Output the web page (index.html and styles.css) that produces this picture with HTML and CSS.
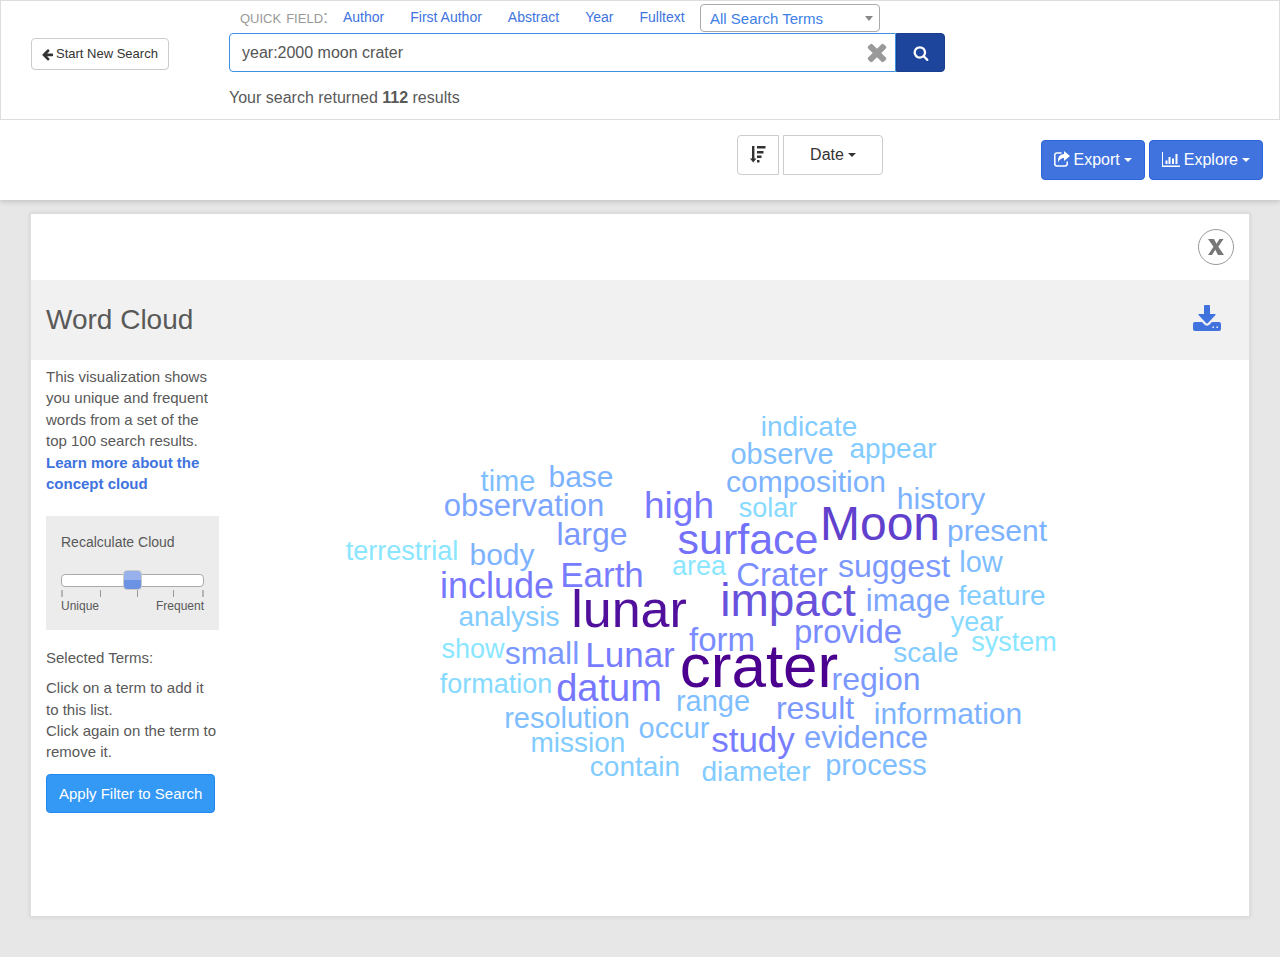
FILE: index.html
```html
<!DOCTYPE html>
<html lang="en">
<head>
<meta charset="utf-8">
<title>Word Cloud</title>
<link rel="stylesheet" href="styles.css">
</head>
<body>
<header class="top">
  <form class="search-bar">
    <div class="start">
      <button type="button" class="btn btn-small">
        <svg class="icon" width="13" height="13" viewBox="0 0 1792 1792"><path d="M1664 896v128q0 53-32.5 90.5t-84.5 37.5h-704l293 294q38 36 38 90t-38 90l-75 76q-37 37-90 37-52 0-91-37l-651-652q-37-37-37-90 0-52 37-91l651-650q38-38 91-38 52 0 90 38l75 74q38 38 38 91t-38 91l-293 293h704q52 0 84.5 37.5t32.5 90.5z"/></svg>
        Start New Search
      </button>
    </div>
    <div class="search-col">
      <div class="quick">
        <span class="quick-label">Quick field:</span>
        <nav class="fields">
          <a href="#">Author</a>
          <a href="#">First Author</a>
          <a href="#">Abstract</a>
          <a href="#">Year</a>
          <a href="#">Fulltext</a>
        </nav>
        <div class="terms">
          <select aria-label="All Search Terms"><option>All Search Terms</option></select>
        </div>
      </div>
      <div class="query">
        <input type="text" aria-label="Search query" value="year:2000 moon crater">
        <button type="button" class="clear" aria-label="Clear">
          <svg class="icon" width="28" height="28" viewBox="0 0 1792 1792"><path d="M1490 1322q0 40-28 68l-136 136q-28 28-68 28t-68-28l-294-294-294 294q-28 28-68 28t-68-28l-136-136q-28-28-28-68t28-68l294-294-294-294q-28-28-28-68t28-68l136-136q28-28 68-28t68 28l294 294 294-294q28-28 68-28t68 28l136 136q28 28 28 68t-28 68l-294 294 294 294q28 28 28 68z"/></svg>
        </button>
        <button type="submit" class="go" aria-label="Search">
          <svg class="icon" width="16" height="16" viewBox="0 0 1792 1792"><path d="M1216 832q0-185-131.5-316.5t-316.5-131.5-316.5 131.5-131.5 316.5 131.5 316.5 316.5 131.5 316.5-131.5 131.5-316.5zm512 832q0 52-38 90t-90 38q-54 0-90-38l-343-342q-179 124-399 124-143 0-273.5-55.5t-225-150-150-225-55.5-273.5 55.5-273.5 150-225 225-150 273.5-55.5 273.5 55.5 225 150 150 225 55.5 273.5q0 220-124 399l343 343q37 37 37 90z"/></svg>
        </button>
      </div>
      <p class="count">Your search returned <strong>112</strong> results</p>
    </div>
  </form>
  <div class="tools">
    <div class="sort">
      <button type="button" class="btn sort-dir" aria-label="Sort direction">
        <svg class="icon" width="16" height="17" viewBox="0 0 16 17"><path d="M2 0h2.400v12.500h2.100L3.200 16.500 0 12.500h2zM7 0h8.500v2.400H7zM7 5h6.500v2.400H7zM7 9.500h4.500V12H7zM7 14h2.500v2.400H7z"/></svg>
      </button>
      <button type="button" class="btn sort-by">Date <span class="caret"></span></button>
    </div>
    <div class="actions">
      <button type="button" class="btn btn-blue">
        <svg class="icon icon-up" width="16" height="16" viewBox="0 0 16 16"><path d="M7.500 2H3Q.8 2 .8 4.200v8.600Q.8 15 3 15h8q2.200 0 2.200-2.200V10.500" fill="none" stroke="currentColor" stroke-width="1.500"/><path d="M10 0l6 5-6 5V7Q6 7 4 11.500 3 3.500 10 3z"/></svg>
        Export <span class="caret"></span>
      </button>
      <button type="button" class="btn btn-blue">
        <svg class="icon icon-up" width="18" height="16" viewBox="0 0 18 16"><path d="M0 1h1v13.500h17V16H0zM3.500 9.500h2V13h-2zM6.500 6h2v7h-2zM10 7.500h2V13h-2zM13.500 3h2v10h-2z"/></svg>
        Explore <span class="caret"></span>
      </button>
    </div>
  </div>
</header>

<main class="panel">
  <div class="panel-top">
    <button type="button" class="close" aria-label="Close">
      <svg class="icon" width="16" height="16" viewBox="0 0 16 16"><path d="M0 0h6l2.500 4.800L11.500 0H15.500L10.300 7.700 16 16h-6L7.300 10.800 4 16H0l5.500-8.200z"/></svg>
    </button>
  </div>
  <div class="panel-title">
    <h1>Word Cloud</h1>
    <button type="button" class="download" aria-label="Download">
      <svg class="icon" width="28" height="26" viewBox="0 0 28 26"><path d="M11 1q0-1 1-1h4q1 0 1 1v8h5q1 0 .5 1l-7.500 8q-1 1-2 0L5.500 10Q5 9 6 9h5z"/><path fill-rule="evenodd" d="M2 17h7l3 3q2 1.500 4 0l3-3h7q2 0 2 2v5q0 2-2 2H2q-2 0-2-2v-5q0-2 2-2zm17.500 4.500V23H21v-1.500zm4 0V23H25v-1.500z"/></svg>
    </button>
  </div>
  <div class="panel-body">
    <aside class="side">
      <p class="intro">This visualization shows you unique and frequent words from a set of the top 100 search results. <a href="#">Learn more about the concept cloud</a></p>
      <div class="recalc">
        <label for="mix">Recalculate Cloud</label>
        <input id="mix" type="range" min="0" max="4" value="2">
        <div class="ticks"><i></i><i></i><i></i><i></i><i></i></div>
        <div class="ends"><span>Unique</span><span>Frequent</span></div>
      </div>
      <p class="selected">Selected Terms:</p>
      <p class="help">Click on a term to add it to this list.<br>Click again on the term to remove it.</p>
      <button type="button" class="btn apply">Apply Filter to Search</button>
    </aside>
    <div class="cloud">
      <svg viewBox="249 360 985 540" role="img" aria-label="Word cloud">
        <text class="s28" x="809" y="436">indicate</text>
        <text class="s29" x="782" y="464">observe</text>
        <text class="s28" x="893" y="458">appear</text>
        <text class="s30" x="806" y="492">composition</text>
        <text class="s30" x="941" y="509">history</text>
        <text class="s27" x="768" y="517">solar</text>
        <text class="s48" x="880" y="540">Moon</text>
        <text class="s30" x="997" y="541">present</text>
        <text class="s43" x="748" y="554">surface</text>
        <text class="s26" x="699" y="575">area</text>
        <text class="s33" x="782" y="586">Crater</text>
        <text class="s32" x="894" y="577">suggest</text>
        <text class="s29" x="981" y="572">low</text>
        <text class="s37" x="679" y="518">high</text>
        <text class="s29" x="508" y="491">time</text>
        <text class="s30" x="581" y="487">base</text>
        <text class="s31" x="524" y="516">observation</text>
        <text class="s32" x="592" y="545">large</text>
        <text class="s26" x="402" y="560">terrestrial</text>
        <text class="s30" x="502" y="565">body</text>
        <text class="s36" x="497" y="598">include</text>
        <text class="s35" x="602" y="587">Earth</text>
        <text class="s52" x="629" y="627">lunar</text>
        <text class="s46" x="788" y="616">impact</text>
        <text class="s31" x="908" y="611">image</text>
        <text class="s28" x="1002" y="605">feature</text>
        <text class="s27" x="977" y="631">year</text>
        <text class="s33" x="848" y="643">provide</text>
        <text class="s26" x="1014" y="651">system</text>
        <text class="s28" x="926" y="662">scale</text>
        <text class="s33" x="722" y="651">form</text>
        <text class="s62" x="759" y="687">crater</text>
        <text class="s32" x="876" y="690">region</text>
        <text class="s29" x="713" y="711">range</text>
        <text class="s32" x="815" y="719">result</text>
        <text class="s30" x="948" y="724">information</text>
        <text class="s29" x="674" y="738">occur</text>
        <text class="s35" x="753" y="752">study</text>
        <text class="s31" x="866" y="748">evidence</text>
        <text class="s29" x="876" y="775">process</text>
        <text class="s28" x="756" y="781">diameter</text>
        <text class="s28" x="509" y="626">analysis</text>
        <text class="s26" x="473" y="658">show</text>
        <text class="s32" x="542" y="664">small</text>
        <text class="s35" x="630" y="667">Lunar</text>
        <text class="s27" x="496" y="693">formation</text>
        <text class="s38" x="609" y="701">datum</text>
        <text class="s29" x="567" y="728">resolution</text>
        <text class="s28" x="578" y="752">mission</text>
        <text class="s28" x="635" y="776">contain</text>
      </svg>
    </div>
  </div>
</main>
</body>
</html>
```

FILE: styles.css
```css
* { box-sizing: border-box; }

body {
  margin: 0;
  background: #e7e7e7;
  color: #595959;
  font: 15px/1.43 "Liberation Sans", Arial, sans-serif;
}

p, h1 { margin: 0; }
a { color: #4073de; text-decoration: none; }
button, input, select { font: inherit; }
button { cursor: pointer; }
.icon { fill: currentColor; display: block; flex: none; }
.icon-up { margin-bottom: 2px; }

.btn {
  display: inline-flex;
  align-items: center;
  justify-content: center;
  gap: 4px;
  height: 40px;
  padding: 0 12px;
  border: 1px solid #ccc;
  border-radius: 4px;
  background: #fff;
  color: #333;
  font-size: 16px;
  white-space: nowrap;
}

.caret {
  border: 4px solid transparent;
  border-top-color: currentColor;
  border-bottom: 0;
}

/* Header */
.top {
  background: #fff;
  box-shadow: 0 2px 5px rgba(0, 0, 0, 0.15);
}

.search-bar {
  display: flex;
  height: 120px;
  border: 1px solid #ddd;
}

.start { width: 228px; padding: 37px 0 0 30px; }
.btn-small { gap: 2px; height: 32px; padding: 0 10px 0 9px; font-size: 13px; }
.search-col { width: 716px; }

.quick { display: flex; height: 32px; }
.quick-label {
  width: 114px;
  padding-left: 11px;
  color: #999;
  font-size: 18px;
  line-height: 32px;
  font-variant: small-caps;
  text-transform: lowercase;
  white-space: nowrap;
}
.fields { display: flex; gap: 26px; width: 357px; font-size: 14px; line-height: 32px; white-space: nowrap; }

.terms { position: relative; width: 180px; padding-top: 3px; }
.terms select {
  width: 100%;
  height: 28px;
  padding: 1px 9px 0;
  appearance: none;
  border: 1px solid #aaa;
  border-radius: 4px;
  background: #fff;
  color: #4080e6;
}
.terms::after {
  content: "";
  position: absolute;
  right: 7px;
  top: 15px;
  border: 4px solid transparent;
  border-top: 5px solid #888;
  border-bottom: 0;
}

.query { position: relative; display: flex; height: 39px; }
.query input {
  flex: 1;
  min-width: 0;
  padding: 2px 48px 0 12px;
  border: 1px solid #3e92e0;
  border-radius: 4px 0 0 4px;
  color: #555;
  font-size: 16px;
}
.clear {
  position: absolute;
  right: 54px;
  top: 5px;
  padding: 0;
  border: 0;
  background: none;
  color: #999;
}
.go {
  display: flex;
  align-items: center;
  justify-content: center;
  width: 49px;
  border: 1px solid #1a3f8f;
  border-radius: 0 4px 4px 0;
  background: #1c459b;
  color: #fff;
}
.count { padding-top: 15px; font-size: 16px; }

.tools {
  display: flex;
  justify-content: space-between;
  height: 80px;
  padding: 15px 17px 0 0;
}
.sort { display: flex; gap: 4px; margin-left: 737px; }
.sort-dir { width: 42px; padding-bottom: 2px; border-radius: 4px 0 0 4px; }
.sort-by { width: 100px; border-radius: 0 4px 4px 0; }
.actions { display: flex; gap: 4px; padding-top: 5px; }
.btn-blue { border-color: #2a63db; background: #4073de; color: #fff; }

/* Word cloud panel */
.panel {
  margin: 13px 30px 40px;
  border: 1px solid #ddd;
  background: #fff;
  box-shadow: 0 0 4px rgba(0, 0, 0, 0.1);
}
.panel-top {
  display: flex;
  justify-content: flex-end;
  height: 66px;
  padding: 15px;
}
.close {
  display: flex;
  align-items: center;
  justify-content: center;
  width: 36px;
  height: 36px;
  padding: 0;
  border: 1px solid #999;
  border-radius: 50%;
  background: #fff;
  color: #777;
}
.panel-title {
  display: flex;
  align-items: center;
  justify-content: space-between;
  height: 80px;
  padding: 0 28px 0 15px;
  background: #f1f1f1;
}
.panel-title h1 { font-size: 28px; font-weight: 400; }
.download { padding: 0 0 4px; border: 0; background: none; color: #4073de; }

.panel-body { display: flex; min-height: 556px; }
.side { flex: none; width: 203px; padding: 6px 15px; }
.intro a { font-weight: 700; }

.recalc {
  height: 114px;
  margin-top: 21px;
  padding: 16px 15px 0;
  background: #ececec;
}
.recalc label { display: block; margin: 0 0 21px; font-size: 14px; line-height: 21px; }
.recalc input {
  display: block;
  width: 100%;
  height: 13px;
  margin: 0;
  appearance: none;
  border: 1px solid #aaa;
  border-radius: 4px;
  background: #fff;
}
.recalc input::-webkit-slider-thumb {
  appearance: none;
  width: 19px;
  height: 20px;
  border: 1px solid #ccc;
  border-radius: 4px;
  background: linear-gradient(#98b0ec 50%, #6c92e4 50%);
}
.ticks { display: grid; grid-template-columns: 39px 37px 36px 29px 2px; margin-top: 3px; }
.ticks i { width: 1px; height: 7px; background: #999; }
.ticks i:first-child, .ticks i:last-child { width: 2px; background: #b5b5b5; }
.ends { display: flex; justify-content: space-between; font-size: 12px; line-height: 18px; }

.selected { margin-top: 17px; }
.help { margin-top: 9px; }
.apply {
  height: 39px;
  margin-top: 11px;
  border-color: #1e88ef;
  background: #3498f5;
  color: #fff;
  font-size: 15px;
}

.cloud { flex: 1; min-width: 0; padding: 0 15px; }
.cloud svg { display: block; width: 100%; }
.cloud text { text-anchor: middle; cursor: pointer; }
.s26 { font-size: 27px; fill: #8ae6ff; }
.s27 { font-size: 27px; fill: #86daff; }
.s28 { font-size: 28px; fill: #82ccff; }
.s29 { font-size: 29px; fill: #7fbfff; }
.s30 { font-size: 30px; fill: #7db2ff; }
.s31 { font-size: 31px; fill: #7ba5ff; }
.s32 { font-size: 32px; fill: #7b98ff; }
.s33 { font-size: 33px; fill: #7a8cff; }
.s35 { font-size: 35px; fill: #787cff; }
.s36 { font-size: 36px; fill: #7878ff; }
.s37 { font-size: 37px; fill: #7878ff; }
.s38 { font-size: 38px; fill: #7676ff; }
.s43 { font-size: 43px; fill: #7370fa; }
.s46 { font-size: 46px; fill: #6852dc; }
.s48 { font-size: 48px; fill: #6040cc; }
.s52 { font-size: 52px; fill: #50109c; }
.s62 { font-size: 62px; fill: #4b0090; }
```
